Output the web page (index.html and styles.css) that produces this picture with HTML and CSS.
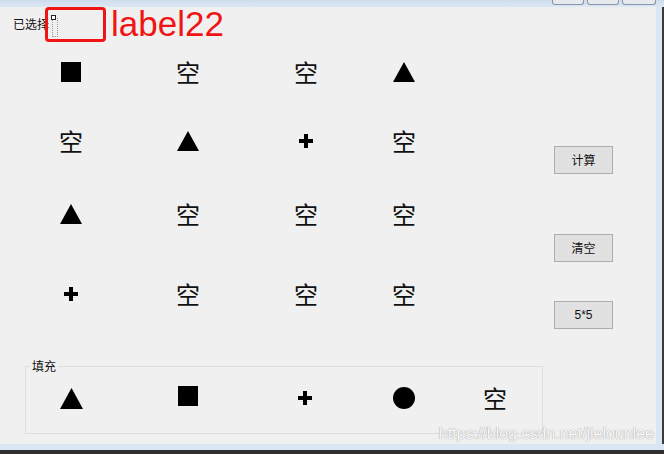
FILE: index.html
```html
<!DOCTYPE html>
<html lang="zh-CN">
<head>
    <meta charset="UTF-8">
    <title>Form1</title>
    <link rel="stylesheet" href="styles.css">
</head>
<body>
    <div class="window">
        <div class="titlebar">
            <div class="caption-btn min"></div>
            <div class="caption-btn max"></div>
            <div class="caption-btn close"></div>
        </div>
        <div class="frame">
            <div class="client">
                <div class="top-row">
                    <span class="lbl">已选择</span>
                    <span class="label22"><i></i></span>
                </div>

                <div class="main">
                    <div class="board">
                        <div class="cell"><svg width="20" height="20"><rect width="20" height="20" fill="#000"/></svg></div>
                        <div class="cell kong">空</div>
                        <div class="cell kong">空</div>
                        <div class="cell"><svg width="22" height="20"><polygon points="11,0 22,20 0,20" fill="#000"/></svg></div>

                        <div class="cell kong">空</div>
                        <div class="cell"><svg width="22" height="20"><polygon points="11,0 22,20 0,20" fill="#000"/></svg></div>
                        <div class="cell"><svg width="14" height="14"><path d="M5 0h4v5h5v4H9v5H5V9H0V5h5z" fill="#000"/></svg></div>
                        <div class="cell kong">空</div>

                        <div class="cell"><svg width="22" height="20"><polygon points="11,0 22,20 0,20" fill="#000"/></svg></div>
                        <div class="cell kong">空</div>
                        <div class="cell kong">空</div>
                        <div class="cell kong">空</div>

                        <div class="cell"><svg width="14" height="14"><path d="M5 0h4v5h5v4H9v5H5V9H0V5h5z" fill="#000"/></svg></div>
                        <div class="cell kong">空</div>
                        <div class="cell kong">空</div>
                        <div class="cell kong">空</div>
                    </div>

                    <div class="buttons">
                        <div class="btn">计算</div>
                        <div class="btn clear">清空</div>
                        <div class="btn five">5*5</div>
                    </div>
                </div>

                <fieldset class="fill">
                    <legend>填充</legend>
                    <div class="fill-row">
                        <div class="cell"><svg width="23" height="21"><polygon points="11.5,0 23,21 0,21" fill="#000"/></svg></div>
                        <div class="cell up"><svg width="20" height="20"><rect width="20" height="20" fill="#000"/></svg></div>
                        <div class="cell"><svg width="14" height="14"><path d="M5 0h4v5h5v4H9v5H5V9H0V5h5z" fill="#000"/></svg></div>
                        <div class="cell"><svg width="22" height="22"><circle cx="11" cy="11" r="11" fill="#000"/></svg></div>
                        <div class="cell kong">空</div>
                    </div>
                </fieldset>

                <div class="mark-box"></div>
                <div class="mark-text">label22</div>
                <div class="watermark">https://blog.csdn.net/jielounlee</div>
            </div>
            <div class="side"></div>
        </div>
        <div class="bottom"></div>
    </div>
</body>
</html>
```

FILE: styles.css
```css
body {
    margin: 0;
    font-family: "Noto Sans CJK SC", "Liberation Sans", sans-serif;
    background: #2b2b2b;
}
.window {
    width: 664px;
    height: 454px;
    display: flex;
    flex-direction: column;
}
.titlebar {
    height: 7px;
    background: linear-gradient(#cfdcec, #dde8f5);
    display: flex;
    justify-content: flex-end;
    padding-right: 8px;
    gap: 3px;
}
.caption-btn {
    width: 30px;
    height: 4px;
    border: 1px solid #8b95a3;
    border-top: none;
    border-radius: 0 0 3px 3px;
    background: #e6e9ee;
}
.caption-btn.close { width: 32px; }
.frame {
    display: flex;
    height: 437px;
}
.client {
    position: relative;
    width: 656px;
    background: #f0f0f0;
    display: flex;
    flex-direction: column;
}
.side {
    width: 6px;
    background: #dae6f4;
    border-right: 2px solid #3a3a3a;
}
.bottom {
    height: 6px;
    background: #dae6f4;
    border-bottom: 4px solid #2f2f2f;
}

.top-row {
    height: 30px;
    display: flex;
    align-items: center;
    padding-left: 13px;
    font-size: 12px;
    color: #111;
}
.lbl { line-height: 14px; margin-top: 4px; }
.label22 {
    position: relative;
    width: 4px;
    height: 17px;
    margin-left: 3px;
    margin-top: 10px;
    border: 1px dotted #999;
}
.label22 i {
    position: absolute;
    left: -2px;
    top: -4px;
    width: 3px;
    height: 3px;
    border: 1px solid #222;
    background: #fff;
}

.main {
    display: flex;
    height: 298px;
}
.board {
    margin-left: 12px;
    display: grid;
    grid-template-columns: 118px 116px 120px 76px;
    grid-template-rows: 70px 68px 78px 82px;
}
.cell {
    display: flex;
    align-items: center;
    justify-content: center;
}
.kong {
    font-size: 24px;
    line-height: 24px;
    color: #111;
}
.buttons {
    margin-left: 112px;
    padding-top: 109px;
    display: flex;
    flex-direction: column;
}
.btn {
    width: 57px;
    height: 26px;
    border: 1px solid #adadad;
    background: #e1e1e1;
    font-size: 12px;
    line-height: 26px;
    text-align: center;
    color: #111;
}
.btn.clear { margin-top: 60px; }
.btn.five { margin-top: 39px; font-family: "Liberation Sans", sans-serif; }

.fill {
    margin: 24px 0 0 25px;
    padding: 0;
    width: 518px;
    height: 75px;
    border: 1px solid #dcdcdc;
    box-sizing: border-box;
}
.fill legend {
    margin-left: 4px;
    padding: 0 2px;
    font-size: 12px;
    line-height: 14px;
    color: #111;
}
.fill-row {
    display: grid;
    grid-template-columns: 90px 144px 90px 108px 74px;
    height: 50px;
    align-items: center;
}
.fill-row .cell.up { margin-top: -5px; }

.mark-box {
    position: absolute;
    left: 45px;
    top: 0;
    width: 55px;
    height: 29px;
    border: 3px solid #f01414;
    border-radius: 4px;
}
.mark-text {
    position: absolute;
    left: 111px;
    top: -3px;
    font-family: "Liberation Sans", sans-serif;
    font-size: 35px;
    line-height: 40px;
    color: #f01414;
}
.watermark {
    position: absolute;
    right: 2px;
    bottom: 1px;
    font-family: "Liberation Sans", sans-serif;
    font-size: 16px;
    color: rgba(255, 255, 255, 0.95);
    text-shadow: 0 0 1px #a8a8a8, 0 0 1px #a8a8a8;
}
```
